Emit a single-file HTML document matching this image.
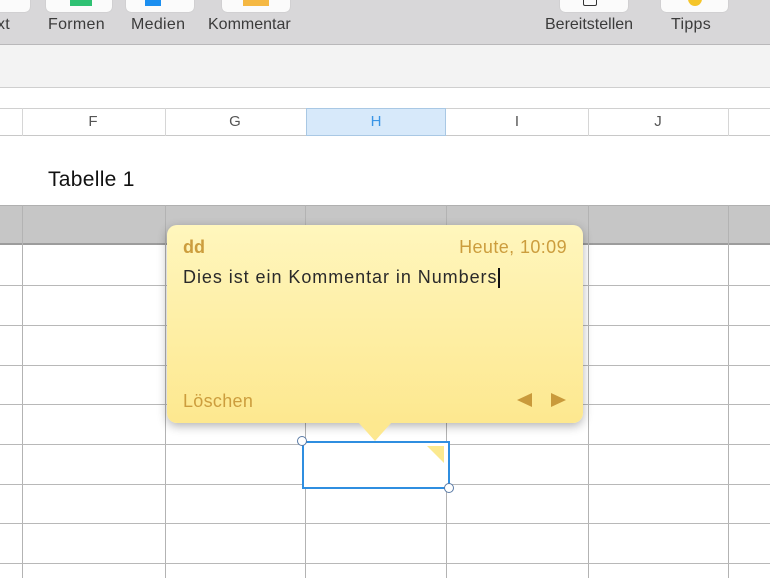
<!DOCTYPE html>
<html><head><meta charset="utf-8"><style>
*{margin:0;padding:0;box-sizing:border-box}
body{width:770px;height:578px;overflow:hidden;background:#fff;font-family:"Liberation Sans",sans-serif;position:relative}
.a{position:absolute;white-space:nowrap}
.tb{left:0;top:0;width:770px;height:45px;background:#d8d7d9;border-bottom:1px solid #b9b8ba}
.btn{top:-10px;height:22px;background:#fbfbfb;border-radius:5px;box-shadow:0 0 1px #aaa}
.lbl{top:16px;font-size:16px;color:#3b3b3b;letter-spacing:0.3px}
.hl{left:0;width:770px;height:1px;background:#b8b8b8}
.vl{width:1px;background:#bdbdbd}
.ch{top:113px;font-size:15px;color:#555;text-align:center;width:20px}
.y{font-size:18px;letter-spacing:0.6px}
</style></head><body>
<div class="a tb"></div>
<div class="a btn" style="left:-40px;width:70px"></div>
<div class="a lbl" style="left:-3px">xt</div>
<div class="a btn" style="left:46px;width:66px"></div>
<div class="a" style="left:70px;top:0;width:22px;height:6px;background:#2fc173"></div>
<div class="a btn" style="left:126px;width:68px"></div>
<div class="a" style="left:145px;top:0;width:16px;height:6px;background:#1c8ff0"></div>
<div class="a btn" style="left:222px;width:68px"></div>
<div class="a" style="left:243px;top:0;width:26px;height:6px;background:#f5b843"></div>
<div class="a btn" style="left:560px;width:68px"></div>
<div class="a" style="left:583px;top:-2px;width:14px;height:8px;border:1.5px solid #333;border-radius:2px"></div>
<div class="a btn" style="left:661px;width:67px"></div>
<div class="a" style="left:688px;top:-8px;width:14px;height:14px;border-radius:50%;background:#f5c529"></div>
<div class="a lbl" style="left:48px">Formen</div>
<div class="a lbl" style="left:131px">Medien</div>
<div class="a lbl" style="left:208px;letter-spacing:0">Kommentar</div>
<div class="a lbl" style="left:545px;letter-spacing:0">Bereitstellen</div>
<div class="a lbl" style="left:671px">Tipps</div>
<div class="a" style="left:0;top:45px;width:770px;height:43px;background:#f3f3f3;border-bottom:1px solid #cfcfcf"></div>
<div class="a" style="left:0;top:108px;width:770px;height:28px;background:#fff;border-top:1px solid #d0d0d0;border-bottom:1px solid #c8c8c8"></div>
<div class="a" style="left:306px;top:108px;width:140px;height:28px;background:#d7e9fa;border:1px solid #a9c8e4"></div>
<div class="a vl" style="left:22px;top:108px;height:28px;background:#d6d6d6"></div>
<div class="a vl" style="left:165px;top:108px;height:28px;background:#d6d6d6"></div>
<div class="a vl" style="left:588px;top:108px;height:28px;background:#d6d6d6"></div>
<div class="a vl" style="left:728px;top:108px;height:28px;background:#d6d6d6"></div>
<div class="a ch" style="left:83px">F</div>
<div class="a ch" style="left:225px">G</div>
<div class="a ch" style="left:366px;color:#3a95e6">H</div>
<div class="a ch" style="left:507px">I</div>
<div class="a ch" style="left:648px">J</div>
<div class="a" style="left:48px;top:168px;font-size:21px;color:#111;letter-spacing:0.3px">Tabelle 1</div>
<div class="a" style="left:0;top:205px;width:770px;height:40px;background:#c6c6c6;border-top:1px solid #b0b0b0;border-bottom:2px solid #9c9c9c"></div>
<div class="a vl" style="left:22px;top:205px;height:373px;background:#b3b3b3"></div>
<div class="a vl" style="left:165px;top:205px;height:373px;background:#b3b3b3"></div>
<div class="a vl" style="left:305px;top:205px;height:373px;background:#b3b3b3"></div>
<div class="a vl" style="left:446px;top:205px;height:373px;background:#b3b3b3"></div>
<div class="a vl" style="left:588px;top:205px;height:373px;background:#b3b3b3"></div>
<div class="a vl" style="left:728px;top:205px;height:373px;background:#b3b3b3"></div>
<div class="a hl" style="top:285px"></div>
<div class="a hl" style="top:325px"></div>
<div class="a hl" style="top:365px"></div>
<div class="a hl" style="top:404px"></div>
<div class="a hl" style="top:444px"></div>
<div class="a hl" style="top:484px"></div>
<div class="a hl" style="top:523px"></div>
<div class="a hl" style="top:563px"></div>
<div class="a" style="left:302px;top:441px;width:148px;height:48px;border:2px solid #2f8ee0;background:#fff"></div>
<div class="a" style="left:427px;top:446px;width:0;height:0;border-top:17px solid #fbe98f;border-left:17px solid transparent"></div>
<div class="a" style="left:297px;top:436px;width:10px;height:10px;border-radius:50%;border:1.5px solid #5b7ba6;background:#fff"></div>
<div class="a" style="left:444px;top:483px;width:10px;height:10px;border-radius:50%;border:1.5px solid #5b7ba6;background:#fff"></div>
<div class="a" style="left:167px;top:225px;width:416px;height:198px;border-radius:10px;background:linear-gradient(#fff6bd,#fde88f);box-shadow:0 3px 10px rgba(0,0,0,.3)"></div>
<div class="a" style="left:358px;top:422px;width:0;height:0;border-left:17px solid transparent;border-right:17px solid transparent;border-top:19px solid #fde88f"></div>
<div class="a y" style="left:183px;top:237px;font-weight:bold;color:#cc9d3d;letter-spacing:0">dd</div>
<div class="a y" style="right:203px;top:237px;color:#cc9d3d;letter-spacing:0.4px">Heute, 10:09</div>
<div class="a y" style="left:183px;top:267px;color:#2a2a2a;letter-spacing:0.95px">Dies ist ein Kommentar in Numbers</div>
<div class="a" style="left:498px;top:268px;width:1.5px;height:20px;background:#111"></div>
<div class="a y" style="left:183px;top:391px;color:#cc9d3d;letter-spacing:0.3px">Löschen</div>
<div class="a" style="left:517px;top:393px;width:0;height:0;border-top:7px solid transparent;border-bottom:7px solid transparent;border-right:15px solid #c99a3b"></div>
<div class="a" style="left:551px;top:393px;width:0;height:0;border-top:7px solid transparent;border-bottom:7px solid transparent;border-left:15px solid #c99a3b"></div>
</body></html>
